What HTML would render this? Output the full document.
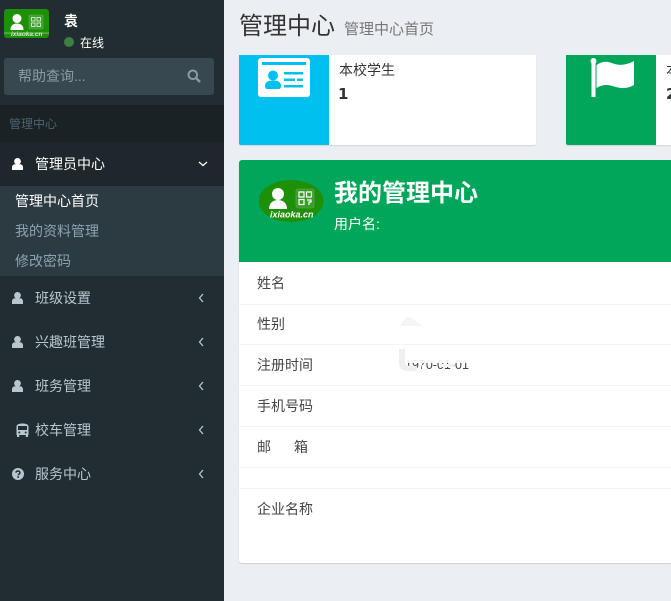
<!DOCTYPE html>
<html><head><meta charset="utf-8">
<style>
*{box-sizing:border-box}
html,body{margin:0;padding:0}
body{width:671px;height:601px;overflow:hidden;position:relative;background:#ebeef3;font-family:"Liberation Sans","Noto Sans CJK SC",sans-serif;font-size:14px;color:#333}
.a{position:absolute;white-space:nowrap}
#side{left:0;top:0;width:224px;height:601px;background:#222d32}
.t{line-height:20px}
.ic{position:absolute}
</style></head><body>
<div class="a" id="side"></div>

<svg class="ic" style="left:4px;top:9px" width="45" height="29" viewBox="0 0 45 29"><rect width="45" height="29" rx="3" fill="#1d9008"/><circle cx="13" cy="9.500" r="4.500" fill="#fff"/><path d="M6.500 21c0-4.500 2.500-6.500 6.500-6.500s6.500 2 6.500 6.500z" fill="#fff"/><rect x="25" y="6" width="14" height="14" rx="1" fill="#3fa030" stroke="#5cae4f" stroke-width=".6"/><path d="M27.500 8.500h3.500v3.500h-3.500zM33 8.500h3.500v3.500H33zM27.500 14h3.500v3.500h-3.500zM33 14h3.500v3.500H33z" fill="none" stroke="#c8e6c2" stroke-width="1"/><rect y="23.500" width="45" height="1.200" fill="#6bb75f"/><text x="7" y="27" font-size="6.500" font-weight="bold" font-style="italic" fill="#d5ecd0" font-family="Liberation Sans">ixiaoka.cn</text></svg>

<div class="a t" style="left:64px;top:11px;color:#fff;font-weight:bold">袁</div>
<div class="a" style="left:64px;top:37px;width:10px;height:10px;border-radius:50%;background:#3c7f3f"></div>
<div class="a t" style="left:80px;top:33px;color:#fff;font-size:12px">在线</div>

<div class="a" style="left:4px;top:58px;width:210px;height:37px;background:#374850;border-radius:3px"></div>
<div class="a t" style="left:18px;top:66px;color:#8d9ba2">帮助查询...</div>
<svg class="ic" style="left:187px;top:69px" width="14" height="14" viewBox="0 0 14 14"><circle cx="5.800" cy="5.800" r="4.300" fill="none" stroke="#8d9a9f" stroke-width="2"/><path d="M9 9l4 4" stroke="#8d9a9f" stroke-width="2.400"/></svg>

<div class="a" style="left:0;top:105px;width:224px;height:37px;background:#1a2226"></div>
<div class="a t" style="left:9px;top:114px;color:#4b646f;font-size:12px">管理中心</div>

<div class="a" style="left:0;top:142px;width:224px;height:44px;background:#1e282c"></div>
<div class="a" style="left:0;top:186px;width:224px;height:90px;background:#2c3b41"></div>

<svg width="0" height="0" style="position:absolute"><defs>
<symbol id="u" viewBox="0 0 11 12"><ellipse cx="5.500" cy="3.400" rx="3.400" ry="3.400"/><path d="M0 12V9.500C0 7.300 1.500 6.300 3 6.300h5c1.500 0 3 1 3 3.200V12z"/></symbol>
</defs></svg>

<svg class="ic" style="left:12px;top:158px;fill:#fff" width="11" height="12"><use href="#u"/></svg>
<div class="a t" style="left:35px;top:154px;color:#fff">管理员中心</div>
<svg class="ic" style="left:198px;top:160px" width="10" height="8" viewBox="0 0 10 8"><path d="M1 2l4 3.500L9 2" fill="none" stroke="#fff" stroke-width="1.300"/></svg>

<div class="a t" style="left:15px;top:191px;color:#fff">管理中心首页</div>
<div class="a t" style="left:15px;top:221px;color:#8aa4af">我的资料管理</div>
<div class="a t" style="left:15px;top:251px;color:#8aa4af">修改密码</div>

<svg class="ic" style="left:12px;top:292px;fill:#b8c7ce" width="11" height="12"><use href="#u"/></svg>
<div class="a t" style="left:35px;top:288px;color:#b8c7ce">班级设置</div>
<svg class="ic" style="left:197px;top:293px" width="8" height="10" viewBox="0 0 8 10"><path d="M6 1L2.500 5 6 9" fill="none" stroke="#b8c7ce" stroke-width="1.300"/></svg>

<svg class="ic" style="left:12px;top:336px;fill:#b8c7ce" width="11" height="12"><use href="#u"/></svg>
<div class="a t" style="left:35px;top:332px;color:#b8c7ce">兴趣班管理</div>
<svg class="ic" style="left:197px;top:337px" width="8" height="10" viewBox="0 0 8 10"><path d="M6 1L2.500 5 6 9" fill="none" stroke="#b8c7ce" stroke-width="1.300"/></svg>

<svg class="ic" style="left:12px;top:380px;fill:#b8c7ce" width="11" height="12"><use href="#u"/></svg>
<div class="a t" style="left:35px;top:376px;color:#b8c7ce">班务管理</div>
<svg class="ic" style="left:197px;top:381px" width="8" height="10" viewBox="0 0 8 10"><path d="M6 1L2.500 5 6 9" fill="none" stroke="#b8c7ce" stroke-width="1.300"/></svg>

<svg class="ic" style="left:16px;top:423px" width="13" height="14" viewBox="0 0 13 14"><path d="M.5 3.500C.5 1.500 3 .5 6.500.5s6 1 6 3V12H.5z" fill="#b8c7ce"/><rect x="2" y="3" width="9" height="4" fill="#222d32"/><circle cx="3.300" cy="9.500" r="1" fill="#222d32"/><circle cx="9.700" cy="9.500" r="1" fill="#222d32"/><rect x="1" y="12" width="2.200" height="2" fill="#b8c7ce"/><rect x="9.800" y="12" width="2.200" height="2" fill="#b8c7ce"/></svg>
<div class="a t" style="left:35px;top:420px;color:#b8c7ce">校车管理</div>
<svg class="ic" style="left:197px;top:425px" width="8" height="10" viewBox="0 0 8 10"><path d="M6 1L2.500 5 6 9" fill="none" stroke="#b8c7ce" stroke-width="1.300"/></svg>

<svg class="ic" style="left:12px;top:468px" width="12" height="12" viewBox="0 0 12 12"><circle cx="6" cy="6" r="6" fill="#b8c7ce"/><path d="M4 4.600C4 3.400 5 3 6 3s2 .6 2 1.700C8 6 6.200 6 6.200 7.300" fill="none" stroke="#222d32" stroke-width="1.500"/><rect x="5.300" y="8.200" width="1.700" height="1.600" fill="#222d32"/></svg>
<div class="a t" style="left:35px;top:464px;color:#b8c7ce">服务中心</div>
<svg class="ic" style="left:197px;top:469px" width="8" height="10" viewBox="0 0 8 10"><path d="M6 1L2.500 5 6 9" fill="none" stroke="#b8c7ce" stroke-width="1.300"/></svg>

<div class="a" style="left:239px;top:10px;font-size:24px;line-height:34px;color:#333">管理中心</div>
<div class="a" style="left:344px;top:19px;font-size:15px;line-height:22px;color:#777">管理中心首页</div>

<div class="a" style="left:239px;top:55px;width:297px;height:90px;background:#fff;border-radius:0 0 2px 2px;box-shadow:0 1px 1px rgba(0,0,0,.1)"></div>
<div class="a" style="left:239px;top:55px;width:90px;height:90px;background:#00c0ef;border-radius:0 0 0 2px"></div>
<svg class="ic" style="left:258px;top:58px" width="52" height="40" viewBox="0 0 52 40"><rect width="52" height="39" rx="3" fill="#fff"/><rect x="4" y="4" width="44" height="3" fill="#00c0ef"/><circle cx="15" cy="17.500" r="5" fill="#00c0ef"/><path d="M7 28c0-4 3-5.500 8-5.500s8 1.500 8 5.500c0 2-1 3-2.500 3h-11C8 31 7 30 7 28z" fill="#00c0ef"/><rect x="26" y="14" width="19" height="2.500" fill="#00c0ef"/><rect x="26" y="20.500" width="11" height="2.500" fill="#00c0ef"/><rect x="39" y="20.500" width="6" height="2.500" fill="#00c0ef"/><rect x="26" y="27" width="19" height="2.500" fill="#00c0ef"/></svg>
<div class="a t" style="left:339px;top:60px;color:#333">本校学生</div>
<div class="a" style="left:338px;top:84px;font-family:'DejaVu Sans',sans-serif;font-size:15px;font-weight:bold;line-height:20px;color:#333">1</div>

<div class="a" style="left:566px;top:55px;width:105px;height:90px;background:#fff;box-shadow:0 1px 1px rgba(0,0,0,.1)"></div>
<div class="a" style="left:566px;top:55px;width:90px;height:90px;background:#00a65a;border-radius:0 0 0 2px"></div>
<svg class="ic" style="left:590px;top:57px" width="46" height="41" viewBox="0 0 46 41"><circle cx="3.500" cy="4" r="3" fill="#fff"/><rect x="1.500" y="5" width="4" height="35" fill="#fff"/><path d="M6.500 8C11 5 15 4 20 5.500s8 3 14 2S44 4 44 4v24s-4 2.500-9.500 3-9.500-1.500-14-2.500S11 28 6.500 31z" fill="#fff"/></svg>
<div class="a" style="left:666px;top:55px;width:5px;height:90px;overflow:hidden"><div class="a t" style="left:0;top:5px;color:#333">本校学生</div><div class="a" style="left:0;top:29px;font-family:'DejaVu Sans',sans-serif;font-size:15px;font-weight:bold;line-height:20px;color:#333">2</div></div>

<div class="a" style="left:239px;top:160px;width:432px;height:403px;background:#fff;border-radius:3px 0 0 3px;box-shadow:0 1px 1px rgba(0,0,0,.14)"></div>
<div class="a" style="left:239px;top:160px;width:432px;height:102px;background:#00a65a;border-radius:3px 0 0 0"></div>
<svg class="ic" style="left:259px;top:180px" width="65" height="42" viewBox="0 0 65 42"><ellipse cx="32" cy="21" rx="32.500" ry="21" fill="#1d9008"/><circle cx="19" cy="14" r="6" fill="#fff"/><path d="M10 29c0-6 4-9 9-9s9 3 9 9z" fill="#fff"/><rect x="37" y="9" width="18" height="19" rx="2" fill="#3a9c2a" stroke="#62b055" stroke-width=".6"/><path d="M40 12h5v5h-5zM47.500 12h5v5h-5zM40 19.500h5v5h-5zM48 20h4v2h-2v3" fill="none" stroke="#fff" stroke-width="1.200"/><text x="11" y="37.500" font-size="9" font-weight="bold" font-style="italic" fill="#fff" font-family="Liberation Sans">ixiaoka.cn</text></svg>
<div class="a" style="left:334px;top:177px;font-size:24px;font-weight:bold;line-height:34px;color:#fff">我的管理中心</div>
<div class="a t" style="left:334px;top:214px;color:#fff">用户名:</div>

<div class="a t" style="left:257px;top:273px;color:#444">姓名</div>
<div class="a" style="left:239px;top:304px;width:432px;height:1px;background:#f4f4f4"></div>
<div class="a t" style="left:257px;top:314px;color:#444">性别</div>
<div class="a" style="left:239px;top:344px;width:432px;height:1px;background:#f4f4f4"></div>
<div class="a t" style="left:257px;top:355px;color:#444">注册时间</div>
<div class="a" style="left:239px;top:385px;width:432px;height:1px;background:#f4f4f4"></div>
<div class="a t" style="left:257px;top:396px;color:#444">手机号码</div>
<div class="a" style="left:239px;top:426px;width:432px;height:1px;background:#f4f4f4"></div>
<div class="a t" style="left:257px;top:437px;color:#444">邮</div>
<div class="a t" style="left:294px;top:437px;color:#444">箱</div>
<div class="a" style="left:239px;top:467px;width:432px;height:1px;background:#f4f4f4"></div>
<div class="a" style="left:239px;top:488px;width:432px;height:1px;background:#f4f4f4"></div>
<div class="a t" style="left:257px;top:499px;color:#444">企业名称</div>

<div class="a" style="left:405px;top:358px;font-size:12.500px;line-height:14px;color:#444">1970-01-01</div>
<svg class="ic" style="left:398px;top:316px" width="74" height="60" viewBox="0 0 74 60"><path d="M2 10C5 5 8 1 11 1c3 0 8 6 13 9z" fill="#f5f5f5"/><path d="M1 33h6v13c0 3 2 4 6 4h6v5h-9c-6 0-9-3-9-8z" fill="#efefef"/><rect x="8" y="42" width="64" height="5" fill="#fff" opacity=".9"/><rect x="24" y="49" width="4" height="6" fill="#fff"/><rect x="42" y="48" width="14" height="3" fill="#f3f3f3"/></svg>
</body></html>
